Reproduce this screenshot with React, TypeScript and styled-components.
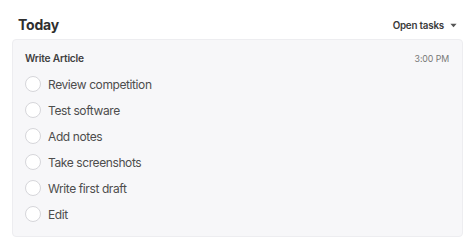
import styled, { createGlobalStyle } from "styled-components";

const GlobalStyle = createGlobalStyle`
  body {
    margin: 0;
    background: #ffffff;
    font-family: Inter, "Liberation Sans", sans-serif;
  }
`;

const tasks = [
  "Review competition",
  "Test software",
  "Add notes",
  "Take screenshots",
  "Write first draft",
  "Edit",
];

export default function App() {
  return (
    <>
      <GlobalStyle />
      <Page>
        <Header>
          <Title>Today</Title>
          <FilterButton>
            Open tasks
            <Caret viewBox="0 0 8 5">
              <path d="M0.5 0.5 L7.5 0.5 L4 4.5 Z" fill="#555" />
            </Caret>
          </FilterButton>
        </Header>
        <Card>
          <CardHeader>
            <CardTitle>Write Article</CardTitle>
            <Time>3:00 PM</Time>
          </CardHeader>
          <TaskList>
            {tasks.map((t) => (
              <TaskRow key={t}>
                <Check />
                <TaskLabel>{t}</TaskLabel>
              </TaskRow>
            ))}
          </TaskList>
        </Card>
      </Page>
    </>
  );
}

const Page = styled.div`
  width: 474px;
  height: 244px;
  padding: 13px 11px 0 12px;
  box-sizing: border-box;
`;

const Header = styled.div`
  display: flex;
  justify-content: space-between;
  align-items: center;
  padding: 0 6px 0 6px;
  height: 22px;
`;

const Title = styled.h1`
  margin: 0;
  font-size: 14px;
  font-weight: 700;
  color: #2f2f2f;
  letter-spacing: -0.2px;
`;

const FilterButton = styled.div`
  display: flex;
  align-items: center;
  gap: 6px;
  font-size: 9.8px;
  font-weight: 600;
  color: #3a3a3a;
  letter-spacing: -0.2px;
  margin-top: 2px;
`;

const Caret = styled.svg`
  width: 7px;
  height: 5px;
`;

const Card = styled.div`
  margin-top: 4px;
  background: #f7f7f9;
  border: 1px solid #ededf0;
  border-radius: 4px;
  padding: 11px 12px 10px 12px;
  height: 198px;
  box-sizing: border-box;
`;

const CardHeader = styled.div`
  display: flex;
  justify-content: space-between;
  align-items: center;
  height: 14px;
`;

const CardTitle = styled.div`
  font-size: 10.2px;
  font-weight: 600;
  color: #404040;
  letter-spacing: -0.2px;
`;

const Time = styled.div`
  font-size: 8.8px;
  color: #777;
  letter-spacing: -0.1px;
  margin-right: 1px;
`;

const TaskList = styled.div`
  display: flex;
  flex-direction: column;
  gap: 8px;
  margin-top: 10px;
`;

const TaskRow = styled.div`
  display: flex;
  align-items: center;
  gap: 7px;
  height: 18px;
`;

const Check = styled.span`
  width: 14px;
  height: 14px;
  border-radius: 50%;
  border: 1px solid #d6d6da;
  background: #fff;
  flex-shrink: 0;
`;

const TaskLabel = styled.span`
  font-size: 12px;
  color: #4d4d4d;
  letter-spacing: -0.4px;
`;
